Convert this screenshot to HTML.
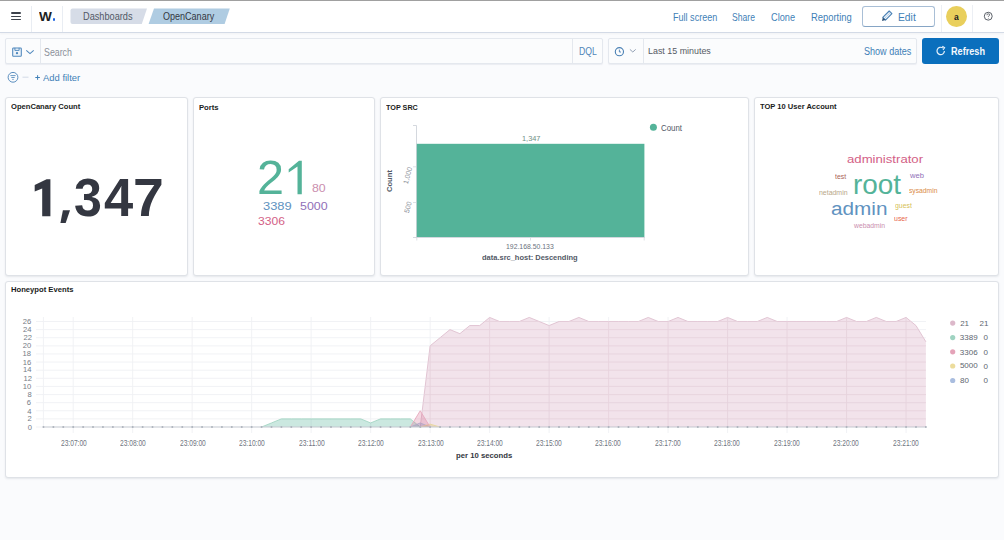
<!DOCTYPE html>
<html><head><meta charset="utf-8"><style>
html,body{margin:0;padding:0;width:1004px;height:540px;overflow:hidden;background:#fafbfd;font-family:"Liberation Sans",sans-serif;}
.t{position:absolute;white-space:nowrap;transform-origin:0 0;font-family:"Liberation Sans",sans-serif;}
.panel{position:absolute;box-sizing:border-box;background:#fff;border:1px solid #dfe2e7;border-radius:3px;box-shadow:0 1px 2px rgba(120,130,145,0.16)}
</style></head><body>
<div style="position:absolute;left:0;top:0;width:1004px;height:1px;background:#a0a0a0"></div>
<div style="position:absolute;left:0;top:1px;width:1004px;height:31px;background:#fff;border-bottom:1px solid #d3dae6;box-shadow:0 1px 2px rgba(0,0,0,0.04)"></div>
<div style="position:absolute;left:10.5px;top:12.4px;width:10.5px;height:1.25px;background:#3d424b;border-radius:1px"></div>
<div style="position:absolute;left:10.5px;top:15.5px;width:10.5px;height:1.25px;background:#3d424b;border-radius:1px"></div>
<div style="position:absolute;left:10.5px;top:18.9px;width:10.5px;height:1.25px;background:#3d424b;border-radius:1px"></div>
<div style="position:absolute;left:31px;top:6px;width:1px;height:26px;background:#e9edf3"></div>
<div style="position:absolute;left:62px;top:6px;width:1px;height:26px;background:#e9edf3"></div>
<div style="position:absolute;left:941px;top:5px;width:1px;height:27px;background:#eceff4"></div>
<div style="position:absolute;left:972px;top:5px;width:1px;height:27px;background:#eceff4"></div>
<div style="position:absolute;left:52.6px;top:18.2px;width:2.6px;height:2.6px;background:#1e63e0;border-radius:50%"></div>
<svg style="position:absolute;left:0;top:0" width="260" height="32"><path d="M72.5 8.5 H147 L141.8 24 H72.5 Q70.5 24 70.5 22 V10.5 Q70.5 8.5 72.5 8.5Z" fill="#d6dce7"/><path d="M154 8.5 H229.8 L224.6 24 H148.6Z" fill="#afcce2"/></svg>
<div style="position:absolute;left:862px;top:6px;width:73px;height:21px;box-sizing:border-box;border:1px solid #a9bfd6;border-bottom-color:#86a5c5;border-radius:3px;background:#fff"></div>
<svg style="position:absolute;left:0;top:0" width="1004" height="32"><path d="M882.8 17.4 L889.2 11.0 L891.9 13.7 L885.5 20.1 Z" fill="#eaf2fa" stroke="#4a80b4" stroke-width="1.1" stroke-linejoin="round"/><path d="M884.3 18.6 L890.4 12.5" stroke="#7aa3cb" stroke-width="0.8" stroke-dasharray="0.9 0.7"/><path d="M882.8 17.4 L882.0 20.9 L885.5 20.1 Z" fill="#2c4f73"/></svg>
<div style="position:absolute;left:946px;top:5.8px;width:20.8px;height:20.8px;border-radius:50%;background:#e9cf5c"></div>
<svg style="position:absolute;left:0;top:0" width="1004" height="32"><circle cx="988.25" cy="16.2" r="3.95" fill="none" stroke="#4a4f58" stroke-width="0.9"/><path d="M986.9 15.2 Q986.9 13.8 988.25 13.8 Q989.6 13.8 989.6 14.9 Q989.6 15.6 988.8 16.0 Q988.25 16.3 988.25 17.0" fill="none" stroke="#4a4f58" stroke-width="0.8"/><circle cx="988.25" cy="18.3" r="0.45" fill="#4a4f58"/></svg>
<div style="position:absolute;left:5px;top:38px;width:598px;height:26px;background:#fbfcfd;border:1px solid #e4e8ee;border-radius:2px;box-sizing:border-box;box-shadow:0 1px 1px rgba(152,162,179,0.15)"></div>
<div style="position:absolute;left:40px;top:39px;width:1px;height:24px;background:#e4e8ee"></div>
<div style="position:absolute;left:572px;top:39px;width:1px;height:24px;background:#e4e8ee"></div>
<svg style="position:absolute;left:11px;top:46px" width="24" height="12" viewBox="0 0 24 12"><rect x="1.7" y="1.9" width="8.6" height="8.4" rx="0.8" fill="#eef4fa" stroke="#4f88bd" stroke-width="1.05"/><path d="M3.9 1.9 V4.4 H8.1 V1.9" fill="none" stroke="#4f88bd" stroke-width="0.95"/><circle cx="6.0" cy="7.2" r="1.15" fill="#4f88bd"/><path d="M15.3 4.3 L19 7.6 L22.7 4.3" fill="none" stroke="#4f88bd" stroke-width="1.05"/></svg>
<div style="position:absolute;left:608px;top:38px;width:309px;height:26px;background:#fbfcfd;border:1px solid #e4e8ee;border-radius:2px;box-sizing:border-box;box-shadow:0 1px 1px rgba(152,162,179,0.15)"></div>
<div style="position:absolute;left:643px;top:39px;width:1px;height:24px;background:#e4e8ee"></div>
<svg style="position:absolute;left:612px;top:45px" width="28" height="12" viewBox="0 0 28 12"><circle cx="7.4" cy="6.7" r="4.1" fill="none" stroke="#4a80b4" stroke-width="1.1"/><path d="M7.4 4.6 V7.0 H9.0" fill="none" stroke="#4a80b4" stroke-width="0.9"/><path d="M17.9 4.4 L20.8 7.0 L23.7 4.4" fill="none" stroke="#8796ab" stroke-width="0.9"/></svg>
<div style="position:absolute;left:922px;top:37.6px;width:76.5px;height:26.3px;background:#0a6fbd;border-radius:3px"></div>
<svg style="position:absolute;left:935px;top:45px" width="12" height="12" viewBox="0 0 12 12"><path d="M9.4 6.0 A3.7 3.7 0 1 1 7.9 3.0" fill="none" stroke="#e6f1fb" stroke-width="1.2"/><path d="M7.3 1.3 L9.6 2.7 L8.0 4.9" fill="none" stroke="#e6f1fb" stroke-width="1.1"/></svg>
<svg style="position:absolute;left:7px;top:70.5px" width="24" height="13" viewBox="0 0 24 13"><circle cx="6" cy="6.3" r="4.9" fill="none" stroke="#5a8ebf" stroke-width="1"/><path d="M3.4 4.6 H8.6 M4.3 6.5 H7.7 M5.3 8.4 H6.7" stroke="#5a8ebf" stroke-width="0.9"/><path d="M15.5 6.2 H21.5" stroke="#d3dae6" stroke-width="1"/></svg>
<svg style="position:absolute;left:0;top:0" width="60" height="90"><path d="M35.3 77.5 H39.9 M37.6 75.2 V79.8" stroke="#3f7fb7" stroke-width="1"/></svg>
<div class="panel" style="left:5px;top:97px;width:183px;height:179px"></div>
<div class="panel" style="left:193px;top:97px;width:182px;height:179px"></div>
<div class="panel" style="left:380px;top:97px;width:369px;height:179px"></div>
<div class="panel" style="left:754px;top:97px;width:245px;height:179px"></div>
<div class="panel" style="left:5px;top:281px;width:994px;height:197px"></div>
<svg style="position:absolute;left:0;top:0" width="340" height="240"><polygon points="46.6,179.3 50.4,179.3 50.4,216.3 42.2,216.3 42.2,188.6 34.7,191.4 34.7,185.0" fill="#343741"/><polygon points="62.9,210.2 70.0,210.2 65.7,223.0 60.4,223.0" fill="#343741"/><polygon points="299.0,160.8 301.8,160.8 301.8,194.3 297.5,194.3 297.5,166.6 288.7,172.4 288.7,169.2" fill="#54b399"/></svg>
<svg style="position:absolute;left:0;top:0" width="1004" height="540"><line x1="416.5" y1="125.5" x2="416.5" y2="237.5" stroke="#c9ced6" stroke-width="0.8"/><line x1="413" y1="237.5" x2="645" y2="237.5" stroke="#c9ced6" stroke-width="0.8"/><line x1="413" y1="125.5" x2="416.5" y2="125.5" stroke="#c9ced6" stroke-width="0.8"/><line x1="413" y1="166.8" x2="416.5" y2="166.8" stroke="#d5d9e0" stroke-width="0.8"/><line x1="413" y1="202.5" x2="416.5" y2="202.5" stroke="#d5d9e0" stroke-width="0.8"/><line x1="416.8" y1="237.5" x2="416.8" y2="240.5" stroke="#d5d9e0" stroke-width="0.8"/><line x1="644.2" y1="237.5" x2="644.2" y2="240.5" stroke="#d5d9e0" stroke-width="0.8"/><line x1="530.5" y1="237.5" x2="530.5" y2="240.5" stroke="#d5d9e0" stroke-width="0.8"/><rect x="416.8" y="143.8" width="227.6" height="93.2" fill="#54b399"/><circle cx="653.4" cy="127.3" r="3.5" fill="#54b399"/></svg>
<div class="t" style="left:385.6px;top:192.4px;font-size:7.6px;line-height:7.6px;font-weight:700;color:#535966;transform-origin:0 0;transform:rotate(-90deg)">Count</div>
<div class="t" style="left:401.8px;top:182.6px;font-size:7px;line-height:7px;color:#8a909a;transform-origin:0 0;transform:rotate(-75deg)">1,000</div>
<div class="t" style="left:403px;top:212px;font-size:7px;line-height:7px;color:#8a909a;transform-origin:0 0;transform:rotate(-75deg)">500</div>
<svg style="position:absolute;left:0;top:0" width="1004" height="540">
<line x1="36" y1="427.00" x2="926" y2="427.00" stroke="#eff1f4" stroke-width="0.9"/>
<line x1="36" y1="418.88" x2="926" y2="418.88" stroke="#eff1f4" stroke-width="0.9"/>
<line x1="36" y1="410.77" x2="926" y2="410.77" stroke="#eff1f4" stroke-width="0.9"/>
<line x1="36" y1="402.65" x2="926" y2="402.65" stroke="#eff1f4" stroke-width="0.9"/>
<line x1="36" y1="394.54" x2="926" y2="394.54" stroke="#eff1f4" stroke-width="0.9"/>
<line x1="36" y1="386.42" x2="926" y2="386.42" stroke="#eff1f4" stroke-width="0.9"/>
<line x1="36" y1="378.30" x2="926" y2="378.30" stroke="#eff1f4" stroke-width="0.9"/>
<line x1="36" y1="370.19" x2="926" y2="370.19" stroke="#eff1f4" stroke-width="0.9"/>
<line x1="36" y1="362.07" x2="926" y2="362.07" stroke="#eff1f4" stroke-width="0.9"/>
<line x1="36" y1="353.96" x2="926" y2="353.96" stroke="#eff1f4" stroke-width="0.9"/>
<line x1="36" y1="345.84" x2="926" y2="345.84" stroke="#eff1f4" stroke-width="0.9"/>
<line x1="36" y1="337.72" x2="926" y2="337.72" stroke="#eff1f4" stroke-width="0.9"/>
<line x1="36" y1="329.61" x2="926" y2="329.61" stroke="#eff1f4" stroke-width="0.9"/>
<line x1="36" y1="321.49" x2="926" y2="321.49" stroke="#eff1f4" stroke-width="0.9"/>
<line x1="43.45" y1="317" x2="43.45" y2="427" stroke="#eff1f4" stroke-width="0.9"/>
<line x1="73.19" y1="317" x2="73.19" y2="433" stroke="#eff1f4" stroke-width="0.9"/>
<line x1="132.69" y1="317" x2="132.69" y2="433" stroke="#eff1f4" stroke-width="0.9"/>
<line x1="192.18" y1="317" x2="192.18" y2="433" stroke="#eff1f4" stroke-width="0.9"/>
<line x1="251.66" y1="317" x2="251.66" y2="433" stroke="#eff1f4" stroke-width="0.9"/>
<line x1="311.15" y1="317" x2="311.15" y2="433" stroke="#eff1f4" stroke-width="0.9"/>
<line x1="370.64" y1="317" x2="370.64" y2="433" stroke="#eff1f4" stroke-width="0.9"/>
<line x1="430.13" y1="317" x2="430.13" y2="433" stroke="#eff1f4" stroke-width="0.9"/>
<line x1="489.62" y1="317" x2="489.62" y2="433" stroke="#eff1f4" stroke-width="0.9"/>
<line x1="549.12" y1="317" x2="549.12" y2="433" stroke="#eff1f4" stroke-width="0.9"/>
<line x1="608.61" y1="317" x2="608.61" y2="433" stroke="#eff1f4" stroke-width="0.9"/>
<line x1="668.10" y1="317" x2="668.10" y2="433" stroke="#eff1f4" stroke-width="0.9"/>
<line x1="727.59" y1="317" x2="727.59" y2="433" stroke="#eff1f4" stroke-width="0.9"/>
<line x1="787.07" y1="317" x2="787.07" y2="433" stroke="#eff1f4" stroke-width="0.9"/>
<line x1="846.56" y1="317" x2="846.56" y2="433" stroke="#eff1f4" stroke-width="0.9"/>
<line x1="906.05" y1="317" x2="906.05" y2="433" stroke="#eff1f4" stroke-width="0.9"/>
<polygon points="43.45,427.0 43.45,427.00 53.37,427.00 63.28,427.00 73.19,427.00 83.11,427.00 93.03,427.00 102.94,427.00 112.86,427.00 122.77,427.00 132.69,427.00 142.60,427.00 152.51,427.00 162.43,427.00 172.34,427.00 182.26,427.00 192.18,427.00 202.09,427.00 212.00,427.00 221.92,427.00 231.83,427.00 241.75,427.00 251.66,427.00 261.58,427.00 271.50,427.00 281.41,427.00 291.32,427.00 301.24,427.00 311.15,427.00 321.07,427.00 330.98,427.00 340.90,427.00 350.81,427.00 360.73,427.00 370.64,427.00 380.56,427.00 390.47,427.00 400.39,427.00 410.30,427.00 420.22,427.00 430.13,345.84 440.05,337.72 449.96,329.61 459.88,333.67 469.79,325.55 479.71,325.55 489.62,317.43 499.54,321.49 509.45,321.49 519.37,321.49 529.28,317.43 539.20,321.49 549.12,325.55 559.03,321.49 568.95,321.49 578.86,317.43 588.77,321.49 598.69,321.49 608.61,321.49 618.52,321.49 628.43,321.49 638.35,321.49 648.26,317.43 658.18,321.49 668.10,321.49 678.01,317.43 687.92,321.49 697.84,321.49 707.75,321.49 717.67,321.49 727.59,317.43 737.50,321.49 747.41,321.49 757.33,321.49 767.25,317.43 777.16,321.49 787.07,321.49 796.99,321.49 806.90,321.49 816.82,321.49 826.74,321.49 836.65,321.49 846.56,317.43 856.48,321.49 866.39,321.49 876.31,317.43 886.23,321.49 896.14,321.49 906.05,317.43 915.97,325.55 925.88,341.78 925.88,427.0" fill="#f2e3eb" fill-opacity="1"/>
<path d="M420.22,427.00 L430.13,345.84 M430.13,345.84 L440.05,337.72 M440.05,337.72 L449.96,329.61 M449.96,329.61 L459.88,333.67 M459.88,333.67 L469.79,325.55 M469.79,325.55 L479.71,325.55 M479.71,325.55 L489.62,317.43 M489.62,317.43 L499.54,321.49 M499.54,321.49 L509.45,321.49 M509.45,321.49 L519.37,321.49 M519.37,321.49 L529.28,317.43 M529.28,317.43 L539.20,321.49 M539.20,321.49 L549.12,325.55 M549.12,325.55 L559.03,321.49 M559.03,321.49 L568.95,321.49 M568.95,321.49 L578.86,317.43 M578.86,317.43 L588.77,321.49 M588.77,321.49 L598.69,321.49 M598.69,321.49 L608.61,321.49 M608.61,321.49 L618.52,321.49 M618.52,321.49 L628.43,321.49 M628.43,321.49 L638.35,321.49 M638.35,321.49 L648.26,317.43 M648.26,317.43 L658.18,321.49 M658.18,321.49 L668.10,321.49 M668.10,321.49 L678.01,317.43 M678.01,317.43 L687.92,321.49 M687.92,321.49 L697.84,321.49 M697.84,321.49 L707.75,321.49 M707.75,321.49 L717.67,321.49 M717.67,321.49 L727.59,317.43 M727.59,317.43 L737.50,321.49 M737.50,321.49 L747.41,321.49 M747.41,321.49 L757.33,321.49 M757.33,321.49 L767.25,317.43 M767.25,317.43 L777.16,321.49 M777.16,321.49 L787.07,321.49 M787.07,321.49 L796.99,321.49 M796.99,321.49 L806.90,321.49 M806.90,321.49 L816.82,321.49 M816.82,321.49 L826.74,321.49 M826.74,321.49 L836.65,321.49 M836.65,321.49 L846.56,317.43 M846.56,317.43 L856.48,321.49 M856.48,321.49 L866.39,321.49 M866.39,321.49 L876.31,317.43 M876.31,317.43 L886.23,321.49 M886.23,321.49 L896.14,321.49 M896.14,321.49 L906.05,317.43 M906.05,317.43 L915.97,325.55 M915.97,325.55 L925.88,341.78" fill="none" stroke="#dfc0cf" stroke-width="0.9"/>
<clipPath id="c21"><polygon points="43.45,427.0 43.45,427.00 53.37,427.00 63.28,427.00 73.19,427.00 83.11,427.00 93.03,427.00 102.94,427.00 112.86,427.00 122.77,427.00 132.69,427.00 142.60,427.00 152.51,427.00 162.43,427.00 172.34,427.00 182.26,427.00 192.18,427.00 202.09,427.00 212.00,427.00 221.92,427.00 231.83,427.00 241.75,427.00 251.66,427.00 261.58,427.00 271.50,427.00 281.41,427.00 291.32,427.00 301.24,427.00 311.15,427.00 321.07,427.00 330.98,427.00 340.90,427.00 350.81,427.00 360.73,427.00 370.64,427.00 380.56,427.00 390.47,427.00 400.39,427.00 410.30,427.00 420.22,427.00 430.13,345.84 440.05,337.72 449.96,329.61 459.88,333.67 469.79,325.55 479.71,325.55 489.62,317.43 499.54,321.49 509.45,321.49 519.37,321.49 529.28,317.43 539.20,321.49 549.12,325.55 559.03,321.49 568.95,321.49 578.86,317.43 588.77,321.49 598.69,321.49 608.61,321.49 618.52,321.49 628.43,321.49 638.35,321.49 648.26,317.43 658.18,321.49 668.10,321.49 678.01,317.43 687.92,321.49 697.84,321.49 707.75,321.49 717.67,321.49 727.59,317.43 737.50,321.49 747.41,321.49 757.33,321.49 767.25,317.43 777.16,321.49 787.07,321.49 796.99,321.49 806.90,321.49 816.82,321.49 826.74,321.49 836.65,321.49 846.56,317.43 856.48,321.49 866.39,321.49 876.31,317.43 886.23,321.49 896.14,321.49 906.05,317.43 915.97,325.55 925.88,341.78 925.88,427.0"/></clipPath><g clip-path="url(#c21)" stroke="#e6d3dd" stroke-width="0.9">
<line x1="36" y1="427.00" x2="926" y2="427.00"/>
<line x1="36" y1="418.88" x2="926" y2="418.88"/>
<line x1="36" y1="410.77" x2="926" y2="410.77"/>
<line x1="36" y1="402.65" x2="926" y2="402.65"/>
<line x1="36" y1="394.54" x2="926" y2="394.54"/>
<line x1="36" y1="386.42" x2="926" y2="386.42"/>
<line x1="36" y1="378.30" x2="926" y2="378.30"/>
<line x1="36" y1="370.19" x2="926" y2="370.19"/>
<line x1="36" y1="362.07" x2="926" y2="362.07"/>
<line x1="36" y1="353.96" x2="926" y2="353.96"/>
<line x1="36" y1="345.84" x2="926" y2="345.84"/>
<line x1="36" y1="337.72" x2="926" y2="337.72"/>
<line x1="36" y1="329.61" x2="926" y2="329.61"/>
<line x1="36" y1="321.49" x2="926" y2="321.49"/>
<line x1="73.19" y1="317" x2="73.19" y2="433"/>
<line x1="132.69" y1="317" x2="132.69" y2="433"/>
<line x1="192.18" y1="317" x2="192.18" y2="433"/>
<line x1="251.66" y1="317" x2="251.66" y2="433"/>
<line x1="311.15" y1="317" x2="311.15" y2="433"/>
<line x1="370.64" y1="317" x2="370.64" y2="433"/>
<line x1="430.13" y1="317" x2="430.13" y2="433"/>
<line x1="489.62" y1="317" x2="489.62" y2="433"/>
<line x1="549.12" y1="317" x2="549.12" y2="433"/>
<line x1="608.61" y1="317" x2="608.61" y2="433"/>
<line x1="668.10" y1="317" x2="668.10" y2="433"/>
<line x1="727.59" y1="317" x2="727.59" y2="433"/>
<line x1="787.07" y1="317" x2="787.07" y2="433"/>
<line x1="846.56" y1="317" x2="846.56" y2="433"/>
<line x1="906.05" y1="317" x2="906.05" y2="433"/>
</g>
<polygon points="43.45,427.0 43.45,427.00 53.37,427.00 63.28,427.00 73.19,427.00 83.11,427.00 93.03,427.00 102.94,427.00 112.86,427.00 122.77,427.00 132.69,427.00 142.60,427.00 152.51,427.00 162.43,427.00 172.34,427.00 182.26,427.00 192.18,427.00 202.09,427.00 212.00,427.00 221.92,427.00 231.83,427.00 241.75,427.00 251.66,427.00 261.58,427.00 271.50,422.94 281.41,418.88 291.32,418.88 301.24,418.88 311.15,418.88 321.07,418.88 330.98,418.88 340.90,418.88 350.81,418.88 360.73,418.88 370.64,422.94 380.56,418.88 390.47,418.88 400.39,418.88 410.30,418.88 420.22,427.00 430.13,427.00 440.05,427.00 449.96,427.00 459.88,427.00 469.79,427.00 479.71,427.00 489.62,427.00 499.54,427.00 509.45,427.00 519.37,427.00 529.28,427.00 539.20,427.00 549.12,427.00 559.03,427.00 568.95,427.00 578.86,427.00 588.77,427.00 598.69,427.00 608.61,427.00 618.52,427.00 628.43,427.00 638.35,427.00 648.26,427.00 658.18,427.00 668.10,427.00 678.01,427.00 687.92,427.00 697.84,427.00 707.75,427.00 717.67,427.00 727.59,427.00 737.50,427.00 747.41,427.00 757.33,427.00 767.25,427.00 777.16,427.00 787.07,427.00 796.99,427.00 806.90,427.00 816.82,427.00 826.74,427.00 836.65,427.00 846.56,427.00 856.48,427.00 866.39,427.00 876.31,427.00 886.23,427.00 896.14,427.00 906.05,427.00 915.97,427.00 925.88,427.00 925.88,427.0" fill="#54b399" fill-opacity="0.3"/>
<path d="M261.58,427.00 L271.50,422.94 M271.50,422.94 L281.41,418.88 M281.41,418.88 L291.32,418.88 M291.32,418.88 L301.24,418.88 M301.24,418.88 L311.15,418.88 M311.15,418.88 L321.07,418.88 M321.07,418.88 L330.98,418.88 M330.98,418.88 L340.90,418.88 M340.90,418.88 L350.81,418.88 M350.81,418.88 L360.73,418.88 M360.73,418.88 L370.64,422.94 M370.64,422.94 L380.56,418.88 M380.56,418.88 L390.47,418.88 M390.47,418.88 L400.39,418.88 M400.39,418.88 L410.30,418.88 M410.30,418.88 L420.22,427.00" fill="none" stroke="#a3d5c3" stroke-width="0.9"/>
<polygon points="43.45,427.0 43.45,427.00 53.37,427.00 63.28,427.00 73.19,427.00 83.11,427.00 93.03,427.00 102.94,427.00 112.86,427.00 122.77,427.00 132.69,427.00 142.60,427.00 152.51,427.00 162.43,427.00 172.34,427.00 182.26,427.00 192.18,427.00 202.09,427.00 212.00,427.00 221.92,427.00 231.83,427.00 241.75,427.00 251.66,427.00 261.58,427.00 271.50,427.00 281.41,427.00 291.32,427.00 301.24,427.00 311.15,427.00 321.07,427.00 330.98,427.00 340.90,427.00 350.81,427.00 360.73,427.00 370.64,427.00 380.56,427.00 390.47,427.00 400.39,427.00 410.30,427.00 420.22,422.94 430.13,427.00 440.05,427.00 449.96,427.00 459.88,427.00 469.79,427.00 479.71,427.00 489.62,427.00 499.54,427.00 509.45,427.00 519.37,427.00 529.28,427.00 539.20,427.00 549.12,427.00 559.03,427.00 568.95,427.00 578.86,427.00 588.77,427.00 598.69,427.00 608.61,427.00 618.52,427.00 628.43,427.00 638.35,427.00 648.26,427.00 658.18,427.00 668.10,427.00 678.01,427.00 687.92,427.00 697.84,427.00 707.75,427.00 717.67,427.00 727.59,427.00 737.50,427.00 747.41,427.00 757.33,427.00 767.25,427.00 777.16,427.00 787.07,427.00 796.99,427.00 806.90,427.00 816.82,427.00 826.74,427.00 836.65,427.00 846.56,427.00 856.48,427.00 866.39,427.00 876.31,427.00 886.23,427.00 896.14,427.00 906.05,427.00 915.97,427.00 925.88,427.00 925.88,427.0" fill="#6092c0" fill-opacity="0.3"/>
<path d="M410.30,427.00 L420.22,422.94 M420.22,422.94 L430.13,427.00" fill="none" stroke="#a9bfdc" stroke-width="0.9"/>
<polygon points="43.45,427.0 43.45,427.00 53.37,427.00 63.28,427.00 73.19,427.00 83.11,427.00 93.03,427.00 102.94,427.00 112.86,427.00 122.77,427.00 132.69,427.00 142.60,427.00 152.51,427.00 162.43,427.00 172.34,427.00 182.26,427.00 192.18,427.00 202.09,427.00 212.00,427.00 221.92,427.00 231.83,427.00 241.75,427.00 251.66,427.00 261.58,427.00 271.50,427.00 281.41,427.00 291.32,427.00 301.24,427.00 311.15,427.00 321.07,427.00 330.98,427.00 340.90,427.00 350.81,427.00 360.73,427.00 370.64,427.00 380.56,427.00 390.47,427.00 400.39,427.00 410.30,427.00 420.22,427.00 430.13,424.16 440.05,427.00 449.96,427.00 459.88,427.00 469.79,427.00 479.71,427.00 489.62,427.00 499.54,427.00 509.45,427.00 519.37,427.00 529.28,427.00 539.20,427.00 549.12,427.00 559.03,427.00 568.95,427.00 578.86,427.00 588.77,427.00 598.69,427.00 608.61,427.00 618.52,427.00 628.43,427.00 638.35,427.00 648.26,427.00 658.18,427.00 668.10,427.00 678.01,427.00 687.92,427.00 697.84,427.00 707.75,427.00 717.67,427.00 727.59,427.00 737.50,427.00 747.41,427.00 757.33,427.00 767.25,427.00 777.16,427.00 787.07,427.00 796.99,427.00 806.90,427.00 816.82,427.00 826.74,427.00 836.65,427.00 846.56,427.00 856.48,427.00 866.39,427.00 876.31,427.00 886.23,427.00 896.14,427.00 906.05,427.00 915.97,427.00 925.88,427.00 925.88,427.0" fill="#d6bf57" fill-opacity="0.3"/>
<path d="M420.22,427.00 L430.13,424.16 M430.13,424.16 L440.05,427.00" fill="none" stroke="#e6d79a" stroke-width="0.9"/>
<polygon points="43.45,427.0 43.45,427.00 53.37,427.00 63.28,427.00 73.19,427.00 83.11,427.00 93.03,427.00 102.94,427.00 112.86,427.00 122.77,427.00 132.69,427.00 142.60,427.00 152.51,427.00 162.43,427.00 172.34,427.00 182.26,427.00 192.18,427.00 202.09,427.00 212.00,427.00 221.92,427.00 231.83,427.00 241.75,427.00 251.66,427.00 261.58,427.00 271.50,427.00 281.41,427.00 291.32,427.00 301.24,427.00 311.15,427.00 321.07,427.00 330.98,427.00 340.90,427.00 350.81,427.00 360.73,427.00 370.64,427.00 380.56,427.00 390.47,427.00 400.39,427.00 410.30,427.00 420.22,410.77 430.13,427.00 440.05,427.00 449.96,427.00 459.88,427.00 469.79,427.00 479.71,427.00 489.62,427.00 499.54,427.00 509.45,427.00 519.37,427.00 529.28,427.00 539.20,427.00 549.12,427.00 559.03,427.00 568.95,427.00 578.86,427.00 588.77,427.00 598.69,427.00 608.61,427.00 618.52,427.00 628.43,427.00 638.35,427.00 648.26,427.00 658.18,427.00 668.10,427.00 678.01,427.00 687.92,427.00 697.84,427.00 707.75,427.00 717.67,427.00 727.59,427.00 737.50,427.00 747.41,427.00 757.33,427.00 767.25,427.00 777.16,427.00 787.07,427.00 796.99,427.00 806.90,427.00 816.82,427.00 826.74,427.00 836.65,427.00 846.56,427.00 856.48,427.00 866.39,427.00 876.31,427.00 886.23,427.00 896.14,427.00 906.05,427.00 915.97,427.00 925.88,427.00 925.88,427.0" fill="#d36086" fill-opacity="0.25"/>
<path d="M410.30,427.00 L420.22,410.77 M420.22,410.77 L430.13,427.00" fill="none" stroke="#e6a9bd" stroke-width="0.9"/>
<line x1="43.45" y1="427.0" x2="925.88" y2="427.0" stroke="#c9cdd4" stroke-width="1"/>
<circle cx="43.45" cy="427.0" r="1.0" fill="#aeb4bd"/>
<circle cx="53.37" cy="427.0" r="1.0" fill="#aeb4bd"/>
<circle cx="63.28" cy="427.0" r="1.0" fill="#aeb4bd"/>
<circle cx="73.19" cy="427.0" r="1.0" fill="#aeb4bd"/>
<circle cx="83.11" cy="427.0" r="1.0" fill="#aeb4bd"/>
<circle cx="93.03" cy="427.0" r="1.0" fill="#aeb4bd"/>
<circle cx="102.94" cy="427.0" r="1.0" fill="#aeb4bd"/>
<circle cx="112.86" cy="427.0" r="1.0" fill="#aeb4bd"/>
<circle cx="122.77" cy="427.0" r="1.0" fill="#aeb4bd"/>
<circle cx="132.69" cy="427.0" r="1.0" fill="#aeb4bd"/>
<circle cx="142.60" cy="427.0" r="1.0" fill="#aeb4bd"/>
<circle cx="152.51" cy="427.0" r="1.0" fill="#aeb4bd"/>
<circle cx="162.43" cy="427.0" r="1.0" fill="#aeb4bd"/>
<circle cx="172.34" cy="427.0" r="1.0" fill="#aeb4bd"/>
<circle cx="182.26" cy="427.0" r="1.0" fill="#aeb4bd"/>
<circle cx="192.18" cy="427.0" r="1.0" fill="#aeb4bd"/>
<circle cx="202.09" cy="427.0" r="1.0" fill="#aeb4bd"/>
<circle cx="212.00" cy="427.0" r="1.0" fill="#aeb4bd"/>
<circle cx="221.92" cy="427.0" r="1.0" fill="#aeb4bd"/>
<circle cx="231.83" cy="427.0" r="1.0" fill="#aeb4bd"/>
<circle cx="241.75" cy="427.0" r="1.0" fill="#aeb4bd"/>
<circle cx="251.66" cy="427.0" r="1.0" fill="#aeb4bd"/>
<circle cx="261.58" cy="427.0" r="1.0" fill="#aeb4bd"/>
<circle cx="271.50" cy="427.0" r="1.0" fill="#aeb4bd"/>
<circle cx="281.41" cy="427.0" r="1.0" fill="#aeb4bd"/>
<circle cx="291.32" cy="427.0" r="1.0" fill="#aeb4bd"/>
<circle cx="301.24" cy="427.0" r="1.0" fill="#aeb4bd"/>
<circle cx="311.15" cy="427.0" r="1.0" fill="#aeb4bd"/>
<circle cx="321.07" cy="427.0" r="1.0" fill="#aeb4bd"/>
<circle cx="330.98" cy="427.0" r="1.0" fill="#aeb4bd"/>
<circle cx="340.90" cy="427.0" r="1.0" fill="#aeb4bd"/>
<circle cx="350.81" cy="427.0" r="1.0" fill="#aeb4bd"/>
<circle cx="360.73" cy="427.0" r="1.0" fill="#aeb4bd"/>
<circle cx="370.64" cy="427.0" r="1.0" fill="#aeb4bd"/>
<circle cx="380.56" cy="427.0" r="1.0" fill="#aeb4bd"/>
<circle cx="390.47" cy="427.0" r="1.0" fill="#aeb4bd"/>
<circle cx="400.39" cy="427.0" r="1.0" fill="#aeb4bd"/>
<circle cx="410.30" cy="427.0" r="1.0" fill="#aeb4bd"/>
<circle cx="420.22" cy="427.0" r="1.0" fill="#aeb4bd"/>
<circle cx="430.13" cy="427.0" r="1.0" fill="#aeb4bd"/>
<circle cx="440.05" cy="427.0" r="1.0" fill="#aeb4bd"/>
<circle cx="449.96" cy="427.0" r="1.0" fill="#aeb4bd"/>
<circle cx="459.88" cy="427.0" r="1.0" fill="#aeb4bd"/>
<circle cx="469.79" cy="427.0" r="1.0" fill="#aeb4bd"/>
<circle cx="479.71" cy="427.0" r="1.0" fill="#aeb4bd"/>
<circle cx="489.62" cy="427.0" r="1.0" fill="#aeb4bd"/>
<circle cx="499.54" cy="427.0" r="1.0" fill="#aeb4bd"/>
<circle cx="509.45" cy="427.0" r="1.0" fill="#aeb4bd"/>
<circle cx="519.37" cy="427.0" r="1.0" fill="#aeb4bd"/>
<circle cx="529.28" cy="427.0" r="1.0" fill="#aeb4bd"/>
<circle cx="539.20" cy="427.0" r="1.0" fill="#aeb4bd"/>
<circle cx="549.12" cy="427.0" r="1.0" fill="#aeb4bd"/>
<circle cx="559.03" cy="427.0" r="1.0" fill="#aeb4bd"/>
<circle cx="568.95" cy="427.0" r="1.0" fill="#aeb4bd"/>
<circle cx="578.86" cy="427.0" r="1.0" fill="#aeb4bd"/>
<circle cx="588.77" cy="427.0" r="1.0" fill="#aeb4bd"/>
<circle cx="598.69" cy="427.0" r="1.0" fill="#aeb4bd"/>
<circle cx="608.61" cy="427.0" r="1.0" fill="#aeb4bd"/>
<circle cx="618.52" cy="427.0" r="1.0" fill="#aeb4bd"/>
<circle cx="628.43" cy="427.0" r="1.0" fill="#aeb4bd"/>
<circle cx="638.35" cy="427.0" r="1.0" fill="#aeb4bd"/>
<circle cx="648.26" cy="427.0" r="1.0" fill="#aeb4bd"/>
<circle cx="658.18" cy="427.0" r="1.0" fill="#aeb4bd"/>
<circle cx="668.10" cy="427.0" r="1.0" fill="#aeb4bd"/>
<circle cx="678.01" cy="427.0" r="1.0" fill="#aeb4bd"/>
<circle cx="687.92" cy="427.0" r="1.0" fill="#aeb4bd"/>
<circle cx="697.84" cy="427.0" r="1.0" fill="#aeb4bd"/>
<circle cx="707.75" cy="427.0" r="1.0" fill="#aeb4bd"/>
<circle cx="717.67" cy="427.0" r="1.0" fill="#aeb4bd"/>
<circle cx="727.59" cy="427.0" r="1.0" fill="#aeb4bd"/>
<circle cx="737.50" cy="427.0" r="1.0" fill="#aeb4bd"/>
<circle cx="747.41" cy="427.0" r="1.0" fill="#aeb4bd"/>
<circle cx="757.33" cy="427.0" r="1.0" fill="#aeb4bd"/>
<circle cx="767.25" cy="427.0" r="1.0" fill="#aeb4bd"/>
<circle cx="777.16" cy="427.0" r="1.0" fill="#aeb4bd"/>
<circle cx="787.07" cy="427.0" r="1.0" fill="#aeb4bd"/>
<circle cx="796.99" cy="427.0" r="1.0" fill="#aeb4bd"/>
<circle cx="806.90" cy="427.0" r="1.0" fill="#aeb4bd"/>
<circle cx="816.82" cy="427.0" r="1.0" fill="#aeb4bd"/>
<circle cx="826.74" cy="427.0" r="1.0" fill="#aeb4bd"/>
<circle cx="836.65" cy="427.0" r="1.0" fill="#aeb4bd"/>
<circle cx="846.56" cy="427.0" r="1.0" fill="#aeb4bd"/>
<circle cx="856.48" cy="427.0" r="1.0" fill="#aeb4bd"/>
<circle cx="866.39" cy="427.0" r="1.0" fill="#aeb4bd"/>
<circle cx="876.31" cy="427.0" r="1.0" fill="#aeb4bd"/>
<circle cx="886.23" cy="427.0" r="1.0" fill="#aeb4bd"/>
<circle cx="896.14" cy="427.0" r="1.0" fill="#aeb4bd"/>
<circle cx="906.05" cy="427.0" r="1.0" fill="#aeb4bd"/>
<circle cx="915.97" cy="427.0" r="1.0" fill="#aeb4bd"/>
<circle cx="925.88" cy="427.0" r="1.0" fill="#aeb4bd"/>
<circle cx="952.7" cy="323.1" r="2.6" fill="#dcb8ca"/>
<circle cx="952.7" cy="337.6" r="2.6" fill="#9fd3c1"/>
<circle cx="952.7" cy="351.8" r="2.6" fill="#e4a3b8"/>
<circle cx="952.7" cy="366" r="2.6" fill="#ecdc9c"/>
<circle cx="952.7" cy="380.5" r="2.6" fill="#a9bddf"/>
</svg>
<span class="t" style="left:39.24px;top:9.72px;font-size:13.04px;line-height:13.04px;font-weight:700;color:#1d1f24;transform:scaleX(1.0441);">W</span>
<span class="t" style="left:82.62px;top:12.48px;font-size:10.14px;line-height:10.14px;font-weight:400;color:#535966;transform:scaleX(0.9071);">Dashboards</span>
<span class="t" style="left:163.17px;top:12.48px;font-size:10.14px;line-height:10.14px;font-weight:400;color:#343741;transform:scaleX(0.8912);">OpenCanary</span>
<span class="t" style="left:672.86px;top:12.88px;font-size:10.14px;line-height:10.14px;font-weight:400;color:#3f7fb7;transform:scaleX(0.8948);">Full screen</span>
<span class="t" style="left:731.87px;top:12.88px;font-size:10.14px;line-height:10.14px;font-weight:400;color:#3f7fb7;transform:scaleX(0.8479);">Share</span>
<span class="t" style="left:771.23px;top:12.88px;font-size:10.14px;line-height:10.14px;font-weight:400;color:#3f7fb7;transform:scaleX(0.9078);">Clone</span>
<span class="t" style="left:811.06px;top:12.88px;font-size:10.14px;line-height:10.14px;font-weight:400;color:#3f7fb7;transform:scaleX(0.9286);">Reporting</span>
<span class="t" style="left:897.58px;top:11.66px;font-size:10.58px;line-height:10.58px;font-weight:400;color:#3f7fb7;transform:scaleX(0.9744);">Edit</span>
<span class="t" style="left:953.70px;top:12.67px;font-size:8.68px;line-height:8.68px;font-weight:700;color:#1a1c21;transform:scaleX(0.9866);">a</span>
<span class="t" style="left:44.46px;top:47.19px;font-size:10.72px;line-height:10.72px;font-weight:400;color:#8a909a;transform:scaleX(0.8218);">Search</span>
<span class="t" style="left:578.51px;top:46.73px;font-size:10.43px;line-height:10.43px;font-weight:400;color:#4f85b8;transform:scaleX(0.8334);">DQL</span>
<span class="t" style="left:647.99px;top:46.37px;font-size:9.57px;line-height:9.57px;font-weight:400;color:#555a64;transform:scaleX(0.9303);">Last 15 minutes</span>
<span class="t" style="left:863.68px;top:47.15px;font-size:10.0px;line-height:10.0px;font-weight:400;color:#3f7fb7;transform:scaleX(0.9054);">Show dates</span>
<span class="t" style="left:951.10px;top:46.44px;font-size:11.01px;line-height:11.01px;font-weight:700;color:#f4f8fc;transform:scaleX(0.8307);">Refresh</span>
<span class="t" style="left:42.96px;top:72.57px;font-size:9.57px;line-height:9.57px;font-weight:400;color:#3f7fb7;transform:scaleX(0.9865);">Add filter</span>
<span class="t" style="left:10.94px;top:103.14px;font-size:7.83px;line-height:7.83px;font-weight:700;color:#1a1c21;transform:scaleX(0.9700);">OpenCanary Count</span>
<span class="t" style="left:198.57px;top:103.69px;font-size:7.54px;line-height:7.54px;font-weight:700;color:#1a1c21;transform:scaleX(1.0201);">Ports</span>
<span class="t" style="left:385.58px;top:103.69px;font-size:7.54px;line-height:7.54px;font-weight:700;color:#1a1c21;transform:scaleX(0.9578);">TOP SRC</span>
<span class="t" style="left:759.61px;top:103.02px;font-size:7.68px;line-height:7.68px;font-weight:700;color:#1a1c21;transform:scaleX(0.9828);">TOP 10 User Account</span>
<span class="t" style="left:11.34px;top:286.17px;font-size:7.39px;line-height:7.39px;font-weight:700;color:#1a1c21;transform:scaleX(1.0365);">Honeypot Events</span>
<span class="t" style="left:74.16px;top:171.12px;font-size:53.57px;line-height:53.57px;font-weight:700;color:#343741;transform:scaleX(0.9361);">3</span>
<span class="t" style="left:103.92px;top:171.12px;font-size:53.57px;line-height:53.57px;font-weight:700;color:#343741;transform:scaleX(0.9803);">4</span>
<span class="t" style="left:133.11px;top:171.12px;font-size:53.57px;line-height:53.57px;font-weight:700;color:#343741;transform:scaleX(1.0355);">7</span>
<span class="t" style="left:257.01px;top:153.65px;font-size:47.71px;line-height:47.71px;font-weight:400;color:#54b399;transform:scaleX(1.0184);">2</span>
<span class="t" style="left:312.33px;top:183.15px;font-size:11.29px;line-height:11.29px;font-weight:400;color:#ca8eae;transform:scaleX(1.0932);">80</span>
<span class="t" style="left:262.85px;top:201.09px;font-size:11.57px;line-height:11.57px;font-weight:400;color:#6092c0;transform:scaleX(1.1151);">3389</span>
<span class="t" style="left:299.95px;top:201.09px;font-size:11.57px;line-height:11.57px;font-weight:400;color:#9170b8;transform:scaleX(1.0714);">5000</span>
<span class="t" style="left:257.99px;top:215.06px;font-size:11.71px;line-height:11.71px;font-weight:400;color:#d36086;transform:scaleX(1.0340);">3306</span>
<span class="t" style="left:847.30px;top:154.22px;font-size:11.51px;line-height:11.51px;font-weight:400;color:#d36086;transform:scaleX(1.1444);">administrator</span>
<span class="t" style="left:852.57px;top:169.74px;font-size:28.3px;line-height:28.3px;font-weight:400;color:#54b399;transform:scaleX(0.9866);">root</span>
<span class="t" style="left:830.51px;top:200.10px;font-size:18.22px;line-height:18.22px;font-weight:400;color:#6092c0;transform:scaleX(1.1395);">admin</span>
<span class="t" style="left:834.70px;top:173.16px;font-size:7.81px;line-height:7.81px;font-weight:400;color:#aa6556;transform:scaleX(0.8875);">test</span>
<span class="t" style="left:910.37px;top:172.72px;font-size:6.3px;line-height:6.3px;font-weight:400;color:#9170b8;transform:scaleX(1.2057);">web</span>
<span class="t" style="left:819.03px;top:189.68px;font-size:6.85px;line-height:6.85px;font-weight:400;color:#b9a888;transform:scaleX(1.0135);">netadmin</span>
<span class="t" style="left:909.21px;top:186.87px;font-size:7.26px;line-height:7.26px;font-weight:400;color:#da8b45;transform:scaleX(0.9278);">sysadmin</span>
<span class="t" style="left:895.44px;top:201.55px;font-size:7.34px;line-height:7.34px;font-weight:400;color:#d6bf57;transform:scaleX(0.9415);">guest</span>
<span class="t" style="left:894.15px;top:215.85px;font-size:6.6px;line-height:6.6px;font-weight:400;color:#e7664c;transform:scaleX(1.0582);">user</span>
<span class="t" style="left:854.43px;top:223.04px;font-size:6.85px;line-height:6.85px;font-weight:400;color:#ca8eae;transform:scaleX(0.9912);">webadmin</span>
<span class="t" style="left:660.99px;top:123.71px;font-size:9.28px;line-height:9.28px;font-weight:400;color:#535966;transform:scaleX(0.8515);">Count</span>
<span class="t" style="left:521.51px;top:135.98px;font-size:7.14px;line-height:7.14px;font-weight:400;color:#6f8f86;transform:scaleX(1.0355);">1,347</span>
<span class="t" style="left:505.87px;top:242.54px;font-size:7.43px;line-height:7.43px;font-weight:400;color:#6a717d;transform:scaleX(0.9258);">192.168.50.133</span>
<span class="t" style="left:482.47px;top:253.81px;font-size:7.95px;line-height:7.95px;font-weight:700;color:#535966;transform:scaleX(0.9428);">data.src_host: Descending</span>
<span class="t" style="left:27.67px;top:423.58px;font-size:7.6px;line-height:7.6px;font-weight:400;color:#767c86;transform:scaleX(1.0000);">0</span>
<span class="t" style="left:27.55px;top:415.20px;font-size:7.6px;line-height:7.6px;font-weight:400;color:#767c86;transform:scaleX(1.0000);">2</span>
<span class="t" style="left:27.35px;top:407.65px;font-size:7.6px;line-height:7.6px;font-weight:400;color:#767c86;transform:scaleX(1.0000);">4</span>
<span class="t" style="left:26.81px;top:399.21px;font-size:7.6px;line-height:7.6px;font-weight:400;color:#767c86;transform:scaleX(1.0000);">6</span>
<span class="t" style="left:27.46px;top:390.72px;font-size:7.6px;line-height:7.6px;font-weight:400;color:#767c86;transform:scaleX(1.0000);">8</span>
<span class="t" style="left:22.79px;top:383.28px;font-size:7.6px;line-height:7.6px;font-weight:400;color:#767c86;transform:scaleX(1.0000);">10</span>
<span class="t" style="left:23.43px;top:374.79px;font-size:7.6px;line-height:7.6px;font-weight:400;color:#767c86;transform:scaleX(1.0000);">12</span>
<span class="t" style="left:23.08px;top:366.27px;font-size:7.6px;line-height:7.6px;font-weight:400;color:#767c86;transform:scaleX(1.0000);">14</span>
<span class="t" style="left:22.68px;top:358.86px;font-size:7.6px;line-height:7.6px;font-weight:400;color:#767c86;transform:scaleX(1.0000);">16</span>
<span class="t" style="left:22.62px;top:350.40px;font-size:7.6px;line-height:7.6px;font-weight:400;color:#767c86;transform:scaleX(1.0000);">18</span>
<span class="t" style="left:22.79px;top:341.96px;font-size:7.6px;line-height:7.6px;font-weight:400;color:#767c86;transform:scaleX(1.0000);">20</span>
<span class="t" style="left:23.43px;top:334.47px;font-size:7.6px;line-height:7.6px;font-weight:400;color:#767c86;transform:scaleX(1.0000);">22</span>
<span class="t" style="left:23.08px;top:325.95px;font-size:7.6px;line-height:7.6px;font-weight:400;color:#767c86;transform:scaleX(1.0000);">24</span>
<span class="t" style="left:22.68px;top:317.54px;font-size:7.6px;line-height:7.6px;font-weight:400;color:#767c86;transform:scaleX(1.0000);">26</span>
<span class="t" style="left:60.81px;top:438.87px;font-size:8.43px;line-height:8.43px;font-weight:400;color:#6f7580;transform:scaleX(0.7871);">23:07:00</span>
<span class="t" style="left:119.81px;top:438.94px;font-size:8.43px;line-height:8.43px;font-weight:400;color:#6f7580;transform:scaleX(0.7871);">23:08:00</span>
<span class="t" style="left:179.73px;top:438.87px;font-size:8.43px;line-height:8.43px;font-weight:400;color:#6f7580;transform:scaleX(0.7871);">23:09:00</span>
<span class="t" style="left:238.73px;top:438.94px;font-size:8.43px;line-height:8.43px;font-weight:400;color:#6f7580;transform:scaleX(0.7871);">23:10:00</span>
<span class="t" style="left:298.63px;top:438.88px;font-size:8.43px;line-height:8.43px;font-weight:400;color:#6f7580;transform:scaleX(0.8011);">23:11:00</span>
<span class="t" style="left:357.65px;top:438.88px;font-size:8.43px;line-height:8.43px;font-weight:400;color:#6f7580;transform:scaleX(0.7871);">23:12:00</span>
<span class="t" style="left:417.57px;top:438.88px;font-size:8.43px;line-height:8.43px;font-weight:400;color:#6f7580;transform:scaleX(0.7871);">23:13:00</span>
<span class="t" style="left:476.57px;top:438.88px;font-size:8.43px;line-height:8.43px;font-weight:400;color:#6f7580;transform:scaleX(0.7871);">23:14:00</span>
<span class="t" style="left:536.49px;top:438.88px;font-size:8.43px;line-height:8.43px;font-weight:400;color:#6f7580;transform:scaleX(0.7871);">23:15:00</span>
<span class="t" style="left:595.48px;top:438.88px;font-size:8.43px;line-height:8.43px;font-weight:400;color:#6f7580;transform:scaleX(0.7871);">23:16:00</span>
<span class="t" style="left:655.41px;top:438.88px;font-size:8.43px;line-height:8.43px;font-weight:400;color:#6f7580;transform:scaleX(0.7871);">23:17:00</span>
<span class="t" style="left:714.40px;top:438.88px;font-size:8.43px;line-height:8.43px;font-weight:400;color:#6f7580;transform:scaleX(0.7871);">23:18:00</span>
<span class="t" style="left:774.33px;top:438.80px;font-size:8.43px;line-height:8.43px;font-weight:400;color:#6f7580;transform:scaleX(0.7871);">23:19:00</span>
<span class="t" style="left:833.32px;top:438.89px;font-size:8.43px;line-height:8.43px;font-weight:400;color:#6f7580;transform:scaleX(0.7871);">23:20:00</span>
<span class="t" style="left:893.25px;top:438.80px;font-size:8.43px;line-height:8.43px;font-weight:400;color:#6f7580;transform:scaleX(0.7871);">23:21:00</span>
<span class="t" style="left:455.69px;top:451.53px;font-size:6.99px;line-height:6.99px;font-weight:700;color:#343741;transform:scaleX(1.1055);">per 10 seconds</span>
<span class="t" style="left:960.16px;top:319.76px;font-size:8.0px;line-height:8.0px;font-weight:400;color:#60666f;transform:scaleX(1.0000);">21</span>
<span class="t" style="left:979.52px;top:319.90px;font-size:8.0px;line-height:8.0px;font-weight:400;color:#60666f;transform:scaleX(1.0000);">21</span>
<span class="t" style="left:959.82px;top:333.77px;font-size:8.0px;line-height:8.0px;font-weight:400;color:#60666f;transform:scaleX(1.0000);">3389</span>
<span class="t" style="left:983.40px;top:333.90px;font-size:8.0px;line-height:8.0px;font-weight:400;color:#60666f;transform:scaleX(1.0000);">0</span>
<span class="t" style="left:959.82px;top:348.57px;font-size:8.0px;line-height:8.0px;font-weight:400;color:#60666f;transform:scaleX(1.0000);">3306</span>
<span class="t" style="left:983.40px;top:348.70px;font-size:8.0px;line-height:8.0px;font-weight:400;color:#60666f;transform:scaleX(1.0000);">0</span>
<span class="t" style="left:959.88px;top:362.36px;font-size:8.0px;line-height:8.0px;font-weight:400;color:#60666f;transform:scaleX(1.0000);">5000</span>
<span class="t" style="left:983.40px;top:362.50px;font-size:8.0px;line-height:8.0px;font-weight:400;color:#60666f;transform:scaleX(1.0000);">0</span>
<span class="t" style="left:960.04px;top:377.37px;font-size:8.0px;line-height:8.0px;font-weight:400;color:#60666f;transform:scaleX(1.0000);">80</span>
<span class="t" style="left:983.40px;top:376.50px;font-size:8.0px;line-height:8.0px;font-weight:400;color:#60666f;transform:scaleX(1.0000);">0</span>
</body></html>
